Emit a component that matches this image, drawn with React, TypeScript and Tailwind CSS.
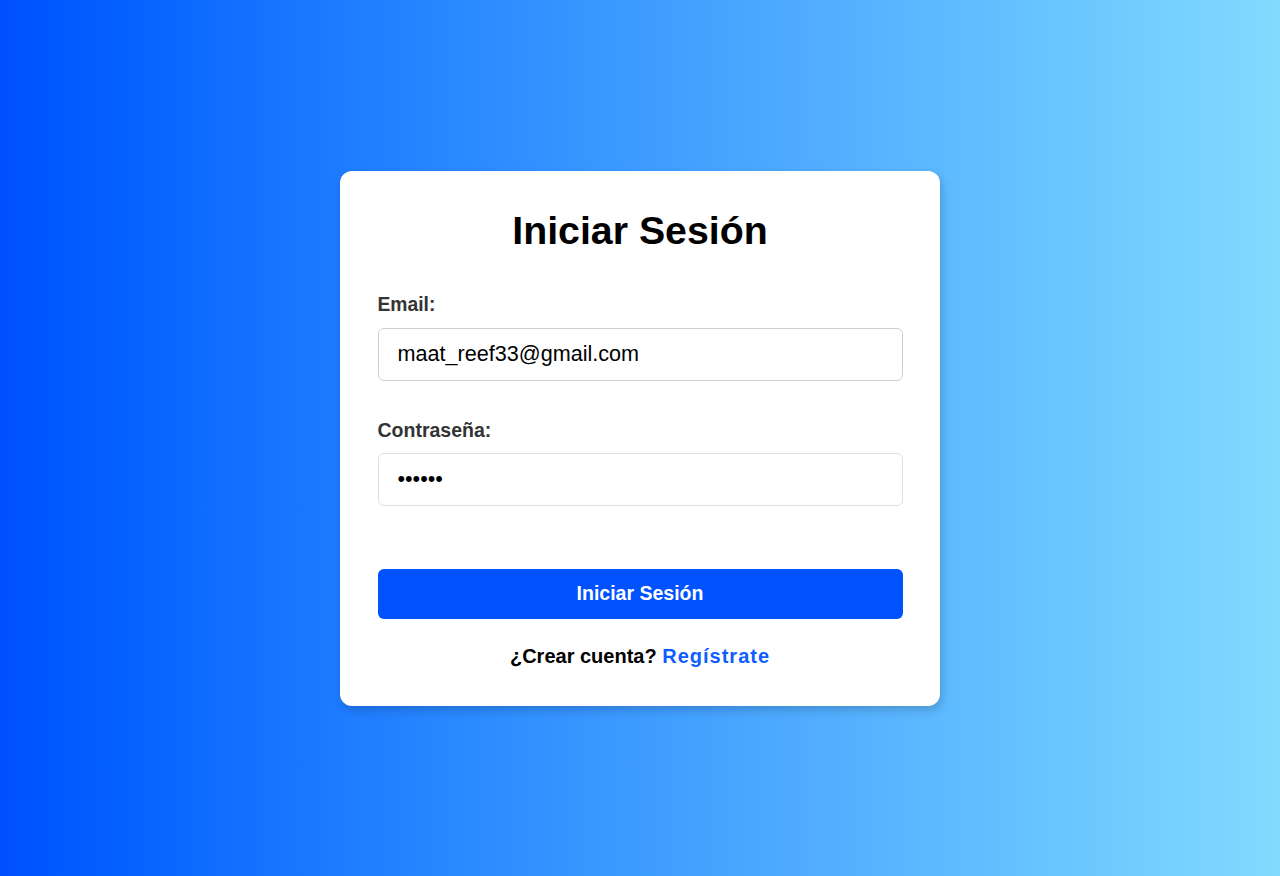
import { useState } from 'react';

export default function App() {
  const [email, setEmail] = useState('maat_reef33@gmail.com');
  const [password, setPassword] = useState('123456');

  return (
    <div className="min-h-screen w-full flex items-center justify-center bg-gradient-to-r from-[#0050ff] to-[#82daff] font-['Liberation_Sans',Arial,sans-serif]">
      <div className="w-[600px] bg-white rounded-[12px] shadow-[2px_4px_10px_rgba(0,0,0,0.18)] pt-[36px] pb-[38px] px-[37.5px]">
        <h1 className="text-[39.3px] leading-[47px] font-bold text-black text-center">Iniciar Sesión</h1>

        <form className="mt-[39px]" onSubmit={(e) => e.preventDefault()}>
          <label className="block text-[19.3px] leading-[24px] font-semibold text-[#333]">Email:</label>
          <input
            type="email"
            value={email}
            onChange={(e) => setEmail(e.target.value)}
            className="mt-[11px] block w-full h-[53px] px-[19px] border border-[#cfcfcf] rounded-[6px] text-[21.6px] text-black outline-none"
          />

          <label className="block mt-[37px] text-[19.5px] leading-[24px] font-semibold text-[#333]">Contraseña:</label>
          <input
            type="password"
            value={password}
            onChange={(e) => setPassword(e.target.value)}
            className="mt-[11px] block w-full h-[53px] px-[19px] border border-[#dedede] rounded-[6px] text-[21.6px] text-black outline-none"
          />

          <button
            type="submit"
            className="mt-[63px] block w-full h-[50px] bg-[#0052ff] rounded-[6px] text-white text-[19.5px] font-bold"
          >
            Iniciar Sesión
          </button>
        </form>

        <p className="mt-[25px] text-center text-[20px] leading-[24px] font-bold text-black">
          ¿Crear cuenta? <a href="#" className="text-[#0f5cff] tracking-[1px]">Regístrate</a>
        </p>
      </div>
    </div>
  );
}
